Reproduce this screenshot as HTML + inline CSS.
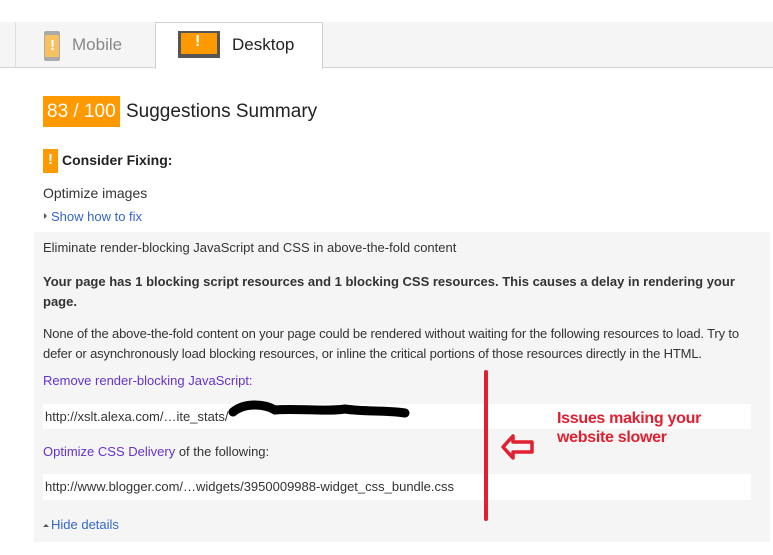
<!DOCTYPE html>
<html><head><meta charset="utf-8"><style>
*{margin:0;padding:0;box-sizing:border-box}
body{width:773px;height:555px;background:#fff;position:relative;overflow:hidden;font-family:"Liberation Sans",Arial,sans-serif;color:#333}
.a{position:absolute;white-space:nowrap}
.t{font-size:13px}
.link{color:#6633cc}
.blue{color:#3366cc}
</style></head><body>
<div class="a" style="left:0;top:22px;width:773px;height:46px;background:#f5f5f5;border-bottom:1px solid #d4d4d4"></div>
<div class="a" style="left:15px;top:22px;width:141px;height:45px;border-left:1px solid #e0e0e0"></div>
<div class="a" style="left:155px;top:22px;width:168px;height:47px;background:#fff;border:1px solid #d0d0d0;border-bottom:none"></div>
<div class="a" style="left:44px;top:31px;width:16px;height:30px;background:#aaa;border-radius:2px"></div>
<div class="a" style="left:45px;top:35px;width:14px;height:22px;background:#f7c060"></div>
<div class="a" style="left:50px;top:37px;font-size:15px;font-weight:bold;color:#fff">!</div>
<div class="a" style="left:72px;top:35px;font-size:17px;color:#888">Mobile</div>
<div class="a" style="left:178px;top:31px;width:42px;height:27px;background:#555"></div>
<div class="a" style="left:181px;top:33px;width:36px;height:21px;background:#f90"></div>
<div class="a" style="left:195px;top:33px;font-size:16px;font-weight:bold;color:#fff">!</div>
<div class="a" style="left:232px;top:35px;font-size:17px;color:#222">Desktop</div>

<div class="a" style="left:43px;top:96px;width:77px;height:31px;background:#f90"></div>
<div class="a" style="left:47px;top:101px;font-size:19px;color:#fff">83 / 100</div>
<div class="a" style="left:126px;top:101px;font-size:19px;color:#222">Suggestions Summary</div>

<div class="a" style="left:43px;top:149px;width:15px;height:24px;background:#f90"></div>
<div class="a" style="left:48px;top:151px;font-size:15px;font-weight:bold;color:#fff">!</div>
<div class="a" style="left:62px;top:152px;font-size:14px;font-weight:bold;color:#222">Consider Fixing:</div>
<div class="a" style="left:43px;top:185px;font-size:14px;color:#333">Optimize images</div>
<div class="a" style="left:44px;top:213px;width:0;height:0;border-left:3px solid #555;border-top:3px solid transparent;border-bottom:3px solid transparent"></div>
<div class="a t blue" style="left:51px;top:209px">Show how to fix</div>

<div class="a" style="left:34px;top:232px;width:736px;height:310px;background:#f5f5f5"></div>
<div class="a t" style="left:43px;top:240px">Eliminate render-blocking JavaScript and CSS in above-the-fold content</div>
<div class="a t" style="left:43px;top:272px;font-weight:bold;line-height:20px">Your page has 1 blocking script resources and 1 blocking CSS resources. This causes a delay in rendering your<br>page.</div>
<div class="a t" style="left:43px;top:324px;line-height:20px;letter-spacing:-0.15px">None of the above-the-fold content on your page could be rendered without waiting for the following resources to load. Try to<br>defer or asynchronously load blocking resources, or inline the critical portions of those resources directly in the HTML.</div>
<div class="a t link" style="left:43px;top:373px">Remove render-blocking JavaScript:</div>
<div class="a" style="left:43px;top:404px;width:708px;height:25px;background:#fff"></div>
<div class="a t" style="left:45px;top:409px">http://xslt.alexa.com/…ite_stats/</div>
<svg class="a" style="left:225px;top:400px" width="190" height="26"><path d="M8 12 C20 2,40 4,50 10 C70 8,100 12,120 9 C140 12,160 10,180 13" stroke="#000" stroke-width="9" fill="none" stroke-linecap="round"/></svg>
<div class="a t" style="left:43px;top:444px"><span class="link">Optimize CSS Delivery</span> of the following:</div>
<div class="a" style="left:43px;top:474px;width:708px;height:26px;background:#fff"></div>
<div class="a t" style="left:45px;top:479px">http://www.blogger.com/…widgets/3950009988-widget_css_bundle.css</div>
<div class="a" style="left:43px;top:524px;width:0;height:0;border-bottom:3px solid #555;border-left:3px solid transparent;border-right:3px solid transparent"></div>
<div class="a t blue" style="left:51px;top:517px">Hide details</div>

<div class="a" style="left:484px;top:370px;width:4px;height:151px;background:#e02030;border-radius:2px"></div>
<svg class="a" style="left:500px;top:432px" width="36" height="30"><path d="M3 15 L13 4 L13 10 L32 10 L32 20 L13 20 L13 26 Z" fill="none" stroke="#e02030" stroke-width="3.5" stroke-linejoin="round"/></svg>
<div class="a" style="left:557px;top:409px;font-size:16px;font-weight:bold;color:#e02030;line-height:19px;letter-spacing:-0.3px">Issues making your<br>website slower</div>
</body></html>
